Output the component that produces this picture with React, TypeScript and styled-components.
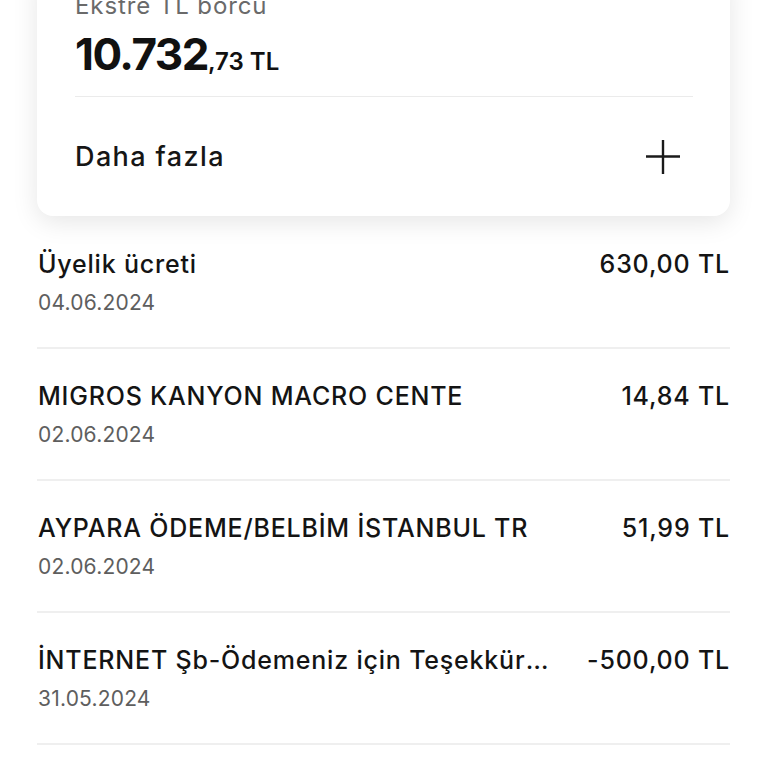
import React from 'react';
import styled, { createGlobalStyle } from 'styled-components';

const GlobalStyle = createGlobalStyle`
  html, body {
    margin: 0;
    padding: 0;
    background: #ffffff;
  }
  body {
    font-family: Inter, "Noto Sans", "Liberation Sans", sans-serif;
    color: #141414;
    -webkit-font-smoothing: antialiased;
  }
`;

type Tx = { title: string; date: string; whole: string; cents: string };

const transactions: Tx[] = [
  { title: 'Üyelik ücreti', date: '04.06.2024', whole: '630', cents: ',00' },
  { title: 'MIGROS KANYON MACRO CENTE', date: '02.06.2024', whole: '14', cents: ',84' },
  { title: 'AYPARA ÖDEME/BELBİM İSTANBUL TR', date: '02.06.2024', whole: '51', cents: ',99' },
  { title: 'İNTERNET Şb-Ödemeniz için Teşekkürler', date: '31.05.2024', whole: '-500', cents: ',00' },
];

const PlusIcon = () => (
  <svg width="36" height="36" viewBox="0 0 36 36" fill="none">
    <path d="M1 17.5H35" stroke="#1a1a1a" strokeWidth="2.4" />
    <path d="M18 1V35" stroke="#1a1a1a" strokeWidth="2.4" />
  </svg>
);

export default function App() {
  return (
    <>
      <GlobalStyle />
      <Page>
        <Card>
          <DebtLabel>Ekstre TL borcu</DebtLabel>
          <DebtAmount>
            10.732<DebtSmall>,73 TL</DebtSmall>
          </DebtAmount>
          <CardDivider />
          <MoreRow>
            <MoreText>Daha fazla</MoreText>
            <PlusIcon />
          </MoreRow>
        </Card>
        <List>
          {transactions.map((t, i) => (
            <Row key={i}>
              <RowMain>
                <Title>{t.title}</Title>
                <Date>{t.date}</Date>
              </RowMain>
              <Amount>
                {t.whole}
                {t.cents} TL
              </Amount>
            </Row>
          ))}
        </List>
      </Page>
    </>
  );
}

const Page = styled.div`
  padding: 0 38px 0 37px;
  box-sizing: border-box;
  width: 768px;
  height: 768px;
  overflow: hidden;
`;

const Card = styled.div`
  margin-top: -24px;
  background: #fff;
  border-radius: 0 0 16px 16px;
  box-shadow: 0 6px 26px rgba(0, 0, 0, 0.1);
  padding: 16px 37px 0 38px;
`;

const DebtLabel = styled.div`
  font-size: 24px;
  line-height: 28px;
  letter-spacing: 0.9px;
  color: #6a6a6a;
  font-weight: 400;
`;

const DebtAmount = styled.div`
  margin-top: 10px;
  font-size: 44px;
  line-height: 48px;
  font-weight: 700;
  letter-spacing: -1.5px;
  color: #111;
`;

const DebtSmall = styled.span`
  font-size: 24px;
  font-weight: 600;
  letter-spacing: 0;
`;

const CardDivider = styled.div`
  margin-top: 10px;
  height: 1px;
  background: #ebebeb;
`;

const MoreRow = styled.div`
  display: flex;
  align-items: center;
  justify-content: space-between;
  height: 119px;
  padding-right: 12px;
`;

const MoreText = styled.span`
  font-size: 27px;
  font-weight: 500;
  letter-spacing: 1.4px;
  color: #161616;
`;

const List = styled.div`
  margin-top: 1px;
`;

const Row = styled.div`
  display: flex;
  justify-content: space-between;
  align-items: flex-start;
  padding: 31px 0 31px 1px;
  border-bottom: 2px solid #efefef;
  gap: 36px;
`;

const RowMain = styled.div`
  min-width: 0;
  flex: 1;
`;

const Title = styled.div`
  font-size: 25px;
  line-height: 32px;
  font-weight: 500;
  letter-spacing: 0.8px;
  color: #141414;
  white-space: nowrap;
  overflow: hidden;
  text-overflow: ellipsis;
`;

const Date = styled.div`
  margin-top: 10px;
  font-size: 21px;
  line-height: 26px;
  letter-spacing: 0.2px;
  color: #5e5e5e;
`;

const Amount = styled.div`
  font-size: 25px;
  line-height: 32px;
  font-weight: 500;
  letter-spacing: 0.8px;
  color: #141414;
  white-space: nowrap;
`;
